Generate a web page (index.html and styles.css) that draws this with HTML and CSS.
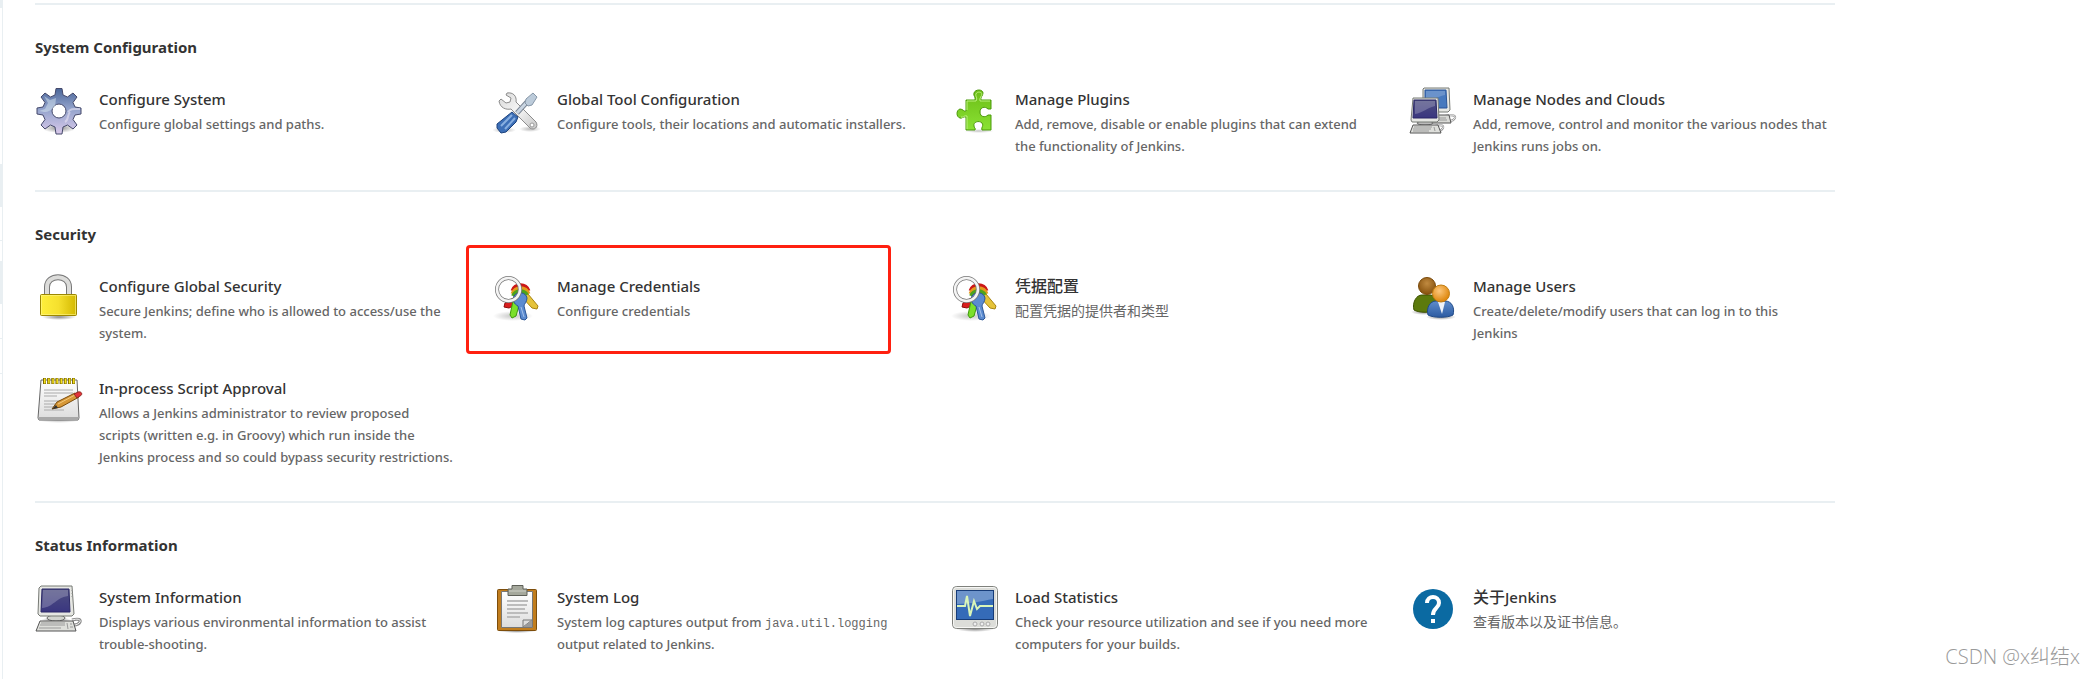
FILE: index.html
```html
<!DOCTYPE html>
<html lang="en">
<head>
  <meta charset="UTF-8">
  <title>Manage Jenkins</title>
  <link rel="stylesheet" href="styles.css">
</head>
<body>
  <!-- gradients and icons used more than once -->
  <svg class="defs" width="0" height="0" aria-hidden="true">
    <defs>
      <linearGradient id="gGear" x1="0" y1="0" x2="0" y2="1">
        <stop offset="0" stop-color="#4a6699"/><stop offset=".45" stop-color="#93a3cc"/><stop offset="1" stop-color="#d9c9ea"/>
      </linearGradient>
      <linearGradient id="gMetal" x1="0" y1="0" x2="1" y2="1">
        <stop offset="0" stop-color="#d8d8d8"/><stop offset=".5" stop-color="#f6f6f6"/><stop offset="1" stop-color="#c4c4c4"/>
      </linearGradient>
      <linearGradient id="gBlue" x1="0" y1="0" x2="0" y2="1">
        <stop offset="0" stop-color="#5e8ccb"/><stop offset="1" stop-color="#2c5ba2"/>
      </linearGradient>
      <linearGradient id="gGreen" x1="0" y1="0" x2="0" y2="1">
        <stop offset="0" stop-color="#6cbd16"/><stop offset="1" stop-color="#8ae234"/>
      </linearGradient>
      <linearGradient id="gLock" x1="0" y1="0" x2="1" y2="0">
        <stop offset="0" stop-color="#fff03c"/><stop offset=".5" stop-color="#f5e02e"/><stop offset="1" stop-color="#d3b800"/>
      </linearGradient>
      <linearGradient id="gScreen" x1="0" y1="0" x2="0" y2="1">
        <stop offset="0" stop-color="#4e4f80"/><stop offset="1" stop-color="#3a3680"/>
      </linearGradient>
      <linearGradient id="gPaper" x1="0" y1="0" x2="0" y2="1">
        <stop offset="0" stop-color="#ffffff"/><stop offset="1" stop-color="#dcdcdc"/>
      </linearGradient>
      <radialGradient id="gShadow">
        <stop offset="0" stop-color="#000" stop-opacity=".45"/><stop offset="1" stop-color="#000" stop-opacity="0"/>
      </radialGradient>
      <radialGradient id="gBrown" cx=".5" cy=".35" r=".6">
        <stop offset="0" stop-color="#c08a40"/><stop offset="1" stop-color="#8a5510"/>
      </radialGradient>
      <radialGradient id="gOrange" cx=".4" cy=".35" r=".6">
        <stop offset="0" stop-color="#fcc77c"/><stop offset="1" stop-color="#e08a12"/>
      </radialGradient>
    </defs>

    <symbol id="icon-keys" viewBox="0 0 48 48">
      <ellipse cx="20" cy="42" rx="20" ry="5" fill="url(#gShadow)" opacity=".5"/>
      <path d="M22 23l6 5-12 6-5-1 1-4z" fill="#d81e1e" stroke="#8f0a0a"/>
      <path d="M31 19l4 1 10 12-1 3-5-1-11-12z" fill="#e5c33a" stroke="#a88410"/>
      <path d="M20 27l7 1-4 14-4 2-2-3z" fill="#7be02a" stroke="#3f9a0c"/>
      <path d="M20 17a8 8 0 0 1 15 0" fill="none" stroke="#cc1717" stroke-width="5"/>
      <path d="M20 20a8 8 0 0 1 15 0" fill="none" stroke="#e39b1c" stroke-width="5"/>
      <path d="M20 22a8 8 0 0 1 14-1" fill="none" stroke="#4ea41a" stroke-width="4"/>
      <path d="M21 22c3-5 12-4 13 2 0 4-3 6-3 8l3 12-2 2-4-1-3-13c-4-2-6-6-4-10z" fill="#5b8bd0" stroke="#2a5596"/>
      <path d="M28 33l3 10" stroke="#a6c3ea"/>
      <path d="M24 20a2 2 0 1 1 0 4z" fill="#344"/>
      <circle cx="15.500" cy="15.500" r="11.500" fill="none" stroke="#777" stroke-width="4"/>
      <circle cx="15.500" cy="15.500" r="11.500" fill="none" stroke="#f4f4f4" stroke-width="2.500"/>
    </symbol>

    <symbol id="icon-computer" viewBox="0 0 48 48">
      <ellipse cx="21" cy="35" rx="15" ry="3" fill="url(#gShadow)"/>
      <path d="M37 35c7-2 9 0 8 2s-4 3-6 3" fill="none" stroke="#8c8c8c" stroke-width="3"/>
      <path d="M37 35c7-2 9 0 8 2s-4 3-6 3" fill="none" stroke="#f4f4f4"/>
      <ellipse cx="21" cy="33" rx="9" ry="3" fill="#d2d4cf" stroke="#666"/>
      <path d="M6 1h31l2 28-2 2H5l-2-2L4 3z" fill="#e6e7e3" stroke="#777a75"/>
      <path d="M7 4h27l1 23H6z" fill="url(#gScreen)" stroke="#2a2766"/>
      <path d="M8 5h25v6c-13 2-14 11-26 12z" fill="#fff" opacity=".22"/>
      <path d="M37 5v9" stroke="#999" stroke-dasharray="1 2"/>
      <path d="M5 36h33l3 10H1z" fill="#dedfdb" stroke="#555"/>
      <path d="M6 38h24M5 40h25M4 43h22M32 38l1 6M35 39h2M35 42h3" stroke="#999"/>
    </symbol>
  </svg>

  <aside class="side">
    <div class="side-fill side-top"></div>
    <div class="side-empty"></div>
    <div class="side-fill side-block"></div>
    <div class="side-row side-row-a"></div>
    <div class="side-gap"></div>
    <div class="side-fill side-block"></div>
    <div class="side-row side-row-b"></div>
    <div class="side-row side-row-c"></div>
  </aside>

  <main class="content">
    <section class="section">
      <h2>System Configuration</h2>
      <div class="items">
        <a class="item" href="#configure">
          <svg class="icon" viewBox="0 0 48 48">
            <ellipse cx="24" cy="41" rx="17" ry="5" fill="url(#gShadow)"/>
            <path fill-rule="evenodd" fill="url(#gGear)" stroke="#45496b" d="M21 1.500h6l1 6.500 4.500 2 5.500-4 4 4-4 5.500 2 4.500 6 1v6l-6 1-2 4.500 4 5.500-4 4-5.500-4-4.500 2-1 7h-6l-1-7-4.500-2-5.500 4-4-4 4-5.500-2-4.500-6-1v-6l6-1 2-4.500-4-5.500 4-4 5.500 4 4.500-2zM24 17a7 7 0 1 0 0 14 7 7 0 1 0 0-14z"/>
            <path d="M9 9l6 4 6-2-1 9c-5 3-6 5-11 5l-5-1 6-2 3-6z" fill="#d5e6ef" opacity=".5"/>
            <path d="M33 25c3-4 6-3 12-3M30 35c4-2 2-7 5-10" fill="none" stroke="#e8e2f4" stroke-width="2" opacity=".6"/>
          </svg>
          <dl>
            <dt>Configure System</dt>
            <dd>Configure global settings and paths.</dd>
          </dl>
        </a>
        <a class="item" href="#tools">
          <svg class="icon" viewBox="0 0 48 48">
            <ellipse cx="11" cy="43" rx="12" ry="3" fill="url(#gShadow)" opacity=".6"/>
            <ellipse cx="37" cy="42" rx="11" ry="3" fill="url(#gShadow)" opacity=".6"/>
            <path d="M14 6c6-1 10 3 9 9l20 20c3 5-2 9-6 6L18 22c-5 1-11-1-12-8l2-2 5 4 4-1 1-4-5-3z" fill="url(#gMetal)" stroke="#8c8c8c"/>
            <circle cx="39" cy="38" r="2" fill="#fff" stroke="#999"/>
            <path d="M24 26l10-11" stroke="#7c8795" stroke-width="5"/>
            <path d="M24 26l10-11" stroke="#c9d5e2" stroke-width="3"/>
            <path d="M33 12l7-6 4 4-5 8-4 1-3-3z" fill="#bccbda" stroke="#8797a8"/>
            <path d="M19 25l6 5-2 5-10 10-5 1-4-5V37z" fill="#3c6fb7" stroke="#1d437e"/>
            <path d="M19 28L8 39M22 31L12 42" stroke="#88afe0" stroke-width="2"/>
          </svg>
          <dl>
            <dt>Global Tool Configuration</dt>
            <dd>Configure tools, their locations and automatic installers.</dd>
          </dl>
        </a>
        <a class="item" href="#plugins">
          <svg class="icon" viewBox="0 -1 48 48">
            <ellipse cx="28" cy="43" rx="15" ry="2" fill="url(#gShadow)" opacity=".5"/>
            <path d="M15 12h9c1-3-2-4-1-7 1-4 9-4 9 0 0 3-3 4-2 7h10v9h-3c-3-3-8-2-8 3s5 6 8 3h3v15h-9c-1-3 2-4 0-7-3-3-9-1-8 3 0 2 2 2 1 4h-9V29c-3-1-4 2-6 1-4-1-4-8 0-9 3 0 4 3 6 2z" fill="url(#gGreen)" stroke="#4b9a0a"/>
            <path d="M16 22v-9h9c2-3-1-5 0-7 1-3 6-2 6 0s-3 4-2 7h10M16 41V28c-3-1-4 2-6 1" fill="none" stroke="#b9f07c"/>
          </svg>
          <dl>
            <dt>Manage Plugins</dt>
            <dd>Add, remove, disable or enable plugins that can extend the functionality of Jenkins.</dd>
          </dl>
        </a>
        <a class="item" href="#nodes">
          <svg class="icon" viewBox="0 0 48 48">
            <path d="M36 29c8-2 11 0 10 2s-3 3-6 3M26 39c7-2 9 0 8 2s-3 3-5 3" fill="none" stroke="#8c8c8c" stroke-width="2"/>
            <path d="M36 29c8-2 11 0 10 2s-3 3-6 3M26 39c7-2 9 0 8 2s-3 3-5 3" fill="none" stroke="#f2f2f2"/>
            <path d="M20 28h20l2 8H20z" fill="#d9dad6" stroke="#555"/>
            <path d="M28 31h9M28 33h10" stroke="#999"/>
            <path d="M15 1h25l1 22-2 2H14V2z" fill="#e6e7e3" stroke="#777a75"/>
            <path d="M16 3h21l1 18H16z" fill="#4779be" stroke="#2a5599"/>
            <path d="M17 4h19v4c-9 2-12 5-19 5z" fill="#fff" opacity=".2"/>
            <ellipse cx="16" cy="36" rx="8" ry="2" fill="#bbb" stroke="#666"/>
            <path d="M4 11h25l1 22-2 2H3l-1-2z" fill="#e6e7e3" stroke="#777a75"/>
            <path d="M5 13h22l1 18H4z" fill="url(#gScreen)" stroke="#2a2766"/>
            <path d="M6 14h20v5c-9 2-12 7-20 8z" fill="#fff" opacity=".22"/>
            <path d="M4 38h25l3 8H1z" fill="#dedfdb" stroke="#555"/>
            <path d="M5 40h18M4 42h18M4 44h16M25 40l1 4" stroke="#999"/>
          </svg>
          <dl>
            <dt>Manage Nodes and Clouds</dt>
            <dd>Add, remove, control and monitor the various nodes that Jenkins runs jobs on.</dd>
          </dl>
        </a>
      </div>
    </section>

    <section class="section">
      <h2>Security</h2>
      <div class="items">
        <a class="item" href="#security">
          <svg class="icon" viewBox="0 -1 48 48">
            <ellipse cx="24" cy="42" rx="17" ry="3" fill="url(#gShadow)"/>
            <path d="M12 20v-8c0-13 22-13 22 0v8" fill="none" stroke="#777" stroke-width="6"/>
            <path d="M12 20v-8c0-13 22-13 22 0v8" fill="none" stroke="#dcdcda" stroke-width="4"/>
            <rect x="5.500" y="19.500" width="36" height="21" rx="1" fill="url(#gLock)" stroke="#9c8700"/>
            <rect x="6.500" y="20.500" width="34" height="19" fill="none" stroke="#fff68a" opacity=".6"/>
          </svg>
          <dl>
            <dt>Configure Global Security</dt>
            <dd>Secure Jenkins; define who is allowed to access/use the system.</dd>
          </dl>
        </a>
        <a class="item marked" href="#credentials">
          <svg class="icon"><use href="#icon-keys"/></svg>
          <dl>
            <dt>Manage Credentials</dt>
            <dd>Configure credentials</dd>
          </dl>
        </a>
        <a class="item" href="#credential-providers" lang="zh">
          <svg class="icon"><use href="#icon-keys"/></svg>
          <dl>
            <dt>凭据配置</dt>
            <dd>配置凭据的提供者和类型</dd>
          </dl>
        </a>
        <a class="item" href="#users">
          <svg class="icon" viewBox="0 0 48 48">
            <ellipse cx="15" cy="38" rx="13" ry="3" fill="url(#gShadow)"/>
            <ellipse cx="32" cy="43" rx="15" ry="3" fill="url(#gShadow)"/>
            <path d="M5 36c-2-7 2-15 8-15h8c6 0 8 8 6 15-5 3-17 3-22 0z" fill="#5c7a0c" stroke="#3c5200"/>
            <circle cx="18" cy="12" r="8.500" fill="url(#gBrown)" stroke="#7a4a0c"/>
            <path d="M19 41c-2-7 2-14 8-14h9c7 0 10 7 8 14-5 3-20 3-25 0z" fill="url(#gBlue)" stroke="#204a87"/>
            <path d="M29 28h7l-3 12z" fill="#eef2f8"/>
            <circle cx="32" cy="19.500" r="8.500" fill="url(#gOrange)" stroke="#c17d11"/>
          </svg>
          <dl>
            <dt>Manage Users</dt>
            <dd>Create/delete/modify users that can log in to this<br>Jenkins</dd>
          </dl>
        </a>
        <a class="item" href="#script-approval">
          <svg class="icon" viewBox="0 0 48 48">
            <ellipse cx="24" cy="44" rx="21" ry="3" fill="url(#gShadow)" opacity=".6"/>
            <path d="M6 4h36l2 38-1 2H4l-1-2z" fill="url(#gPaper)" stroke="#666"/>
            <path d="M3 41h41l-1 3H4z" fill="#a8a8a8"/>
            <path d="M9 14h29M9 17h29M9 20h13M9 25h20M9 28h16M9 31h12M9 34h20" stroke="#aaa"/>
            <path d="M8 5h32" stroke="#7c6a00" stroke-width="6" stroke-dasharray="3 1.150"/>
            <path d="M9 5h31" stroke="#f7e21c" stroke-width="5" stroke-dasharray="1.500 2.650"/>
            <path d="M17 33l5-7 18-9 4 4-18 10z" fill="#d69737" stroke="#7a4c0d"/>
            <path d="M23 28l17-9" stroke="#f3c97c"/>
            <path d="M17 33l4-4 2 3z" fill="#333"/>
            <path d="M39 18l4-2c4-1 5 3 2 4l-3 2z" fill="#e2313a" stroke="#8d2a20"/>
          </svg>
          <dl>
            <dt>In-process Script Approval</dt>
            <dd>Allows a Jenkins administrator to review proposed<br>scripts (written e.g. in Groovy) which run inside the<br>Jenkins process and so could bypass security restrictions.</dd>
          </dl>
        </a>
      </div>
    </section>

    <section class="section">
      <h2>Status Information</h2>
      <div class="items">
        <a class="item" href="#system-info">
          <svg class="icon"><use href="#icon-computer"/></svg>
          <dl>
            <dt>System Information</dt>
            <dd>Displays various environmental information to assist trouble-shooting.</dd>
          </dl>
        </a>
        <a class="item" href="#log">
          <svg class="icon" viewBox="0 0 48 48">
            <ellipse cx="24" cy="46" rx="19" ry="2" fill="url(#gShadow)"/>
            <rect x="4.500" y="4.500" width="39" height="41" rx="1" fill="#c17d1d" stroke="#7d4d0b"/>
            <path d="M8.500 6.500h31v36h-31z" fill="url(#gPaper)" stroke="#777"/>
            <path d="M14 16h21M14 20h20M14 24h18M14 28h21M14 32h13" stroke="#bcbcbc" stroke-width="2"/>
            <path d="M30 42v-7h9z" fill="#ddd" stroke="#777"/>
            <path d="M39 35v7h-9z" fill="#999"/>
            <path d="M19 4V.5h11V4h4v6.500H15V4z" fill="#a5a89c" stroke="#5e6058"/>
            <path d="M16 6h17" stroke="#cfd1c8"/>
          </svg>
          <dl>
            <dt>System Log</dt>
            <dd>System log captures output from <code>java.util.logging</code> output related to Jenkins.</dd>
          </dl>
        </a>
        <a class="item" href="#load-statistics">
          <svg class="icon" viewBox="0 0 48 48">
            <ellipse cx="24" cy="44" rx="19" ry="3" fill="url(#gShadow)"/>
            <rect x="1.500" y="1.500" width="45" height="42" rx="4" fill="#dcddd9" stroke="#7f817c"/>
            <rect x="2.500" y="2.500" width="43" height="40" rx="3" fill="none" stroke="#f7f7f5"/>
            <rect x="5.500" y="5.500" width="37" height="29" fill="#356bb8" stroke="#173c78"/>
            <path d="M6 6h36v8c-12 2-22 5-36 5z" fill="#fff" opacity=".28"/>
            <path d="M6 21h8l2-10 3 20 4-15 3 8 3-3h13" fill="none" stroke="#d9f5b9" stroke-width="2"/>
            <g fill="#eee" stroke="#aaa"><circle cx="24" cy="39" r="2"/><circle cx="31" cy="39" r="2"/><circle cx="37" cy="39" r="2"/></g>
          </svg>
          <dl>
            <dt>Load Statistics</dt>
            <dd>Check your resource utilization and see if you need more computers for your builds.</dd>
          </dl>
        </a>
        <a class="item" href="#about" lang="zh">
          <svg class="icon" viewBox="0 0 48 48">
            <circle cx="24" cy="24" r="20" fill="#0b6aa2"/>
            <path d="M18 18c0-8 12-8 12 0 0 5-6 5-6 12" fill="none" stroke="#fff" stroke-width="4"/>
            <path d="M22 34h4v4h-4z" fill="#fff"/>
          </svg>
          <dl>
            <dt>关于<span lang="en">Jenkins</span></dt>
            <dd>查看版本以及证书信息。</dd>
          </dl>
        </a>
      </div>
    </section>
  </main>

  <div class="watermark">CSDN @x纠结x</div>
</body>
</html>
```

FILE: styles.css
```css
* { box-sizing: border-box; }
body { display: flex; min-height: 100vh; margin: 0; background: #fff; color: #333; font-family: "Noto Sans", "Noto Sans CJK SC", sans-serif; overflow: hidden; }
.defs { position: absolute; }

/* edge of the side panel */
.side { width: 3px; flex: none; border-right: 1px solid #e9eff2; }
.side-fill { background: #e9eff2; }
.side-top { height: 8px; }
.side-empty { height: 156px; }
.side-block { height: 43px; }
.side-row { border-bottom: 1px solid #e9eff2; }
.side-row-a { height: 34px; }
.side-gap { height: 20px; }
.side-row-b { height: 35px; }
.side-row-c { height: 35px; }

.content { flex: 1; max-width: 1864px; padding: 3px 32px 0; }
.section { padding: 30px 0 32px; border-top: 2px solid #e9eff2; }
h2 { margin: 0 0 28px; font-size: 15px; line-height: 24px; font-weight: 700; }
.items { display: grid; grid-template-columns: repeat(4, 1fr); gap: 32px; padding-bottom: 1px; }
.item { position: relative; display: flex; gap: 16px; color: inherit; text-decoration: none; }
.icon { width: 48px; height: 48px; flex: none; }
dl { margin: 0; flex: 1; min-width: 0; }
dt { margin-bottom: 2px; font-size: 15px; line-height: 24px; font-weight: 500; }
dd { margin: 0; font-size: 13px; line-height: 22px; font-weight: 500; color: #666; }
code { font-family: "Liberation Mono", monospace; font-size: 12px; line-height: 1; font-weight: 400; }
.item:lang(zh) dt { font-size: 16px; }
.item:lang(zh) dd { font-size: 14px; font-weight: 400; }
.item dt span { font-size: 15px; }

/* red frame around the item */
.marked::after { content: ""; box-sizing: border-box; position: absolute; top: -29px; left: -27px; width: 425px; height: 109px; border: 3px solid #ff2010; border-radius: 4px; }

.watermark { position: absolute; right: 14px; top: 643px; font-size: 20px; line-height: 28px; color: #999; font-family: "Open Sans", "Noto Sans CJK SC", sans-serif; font-weight: 300; }
```
